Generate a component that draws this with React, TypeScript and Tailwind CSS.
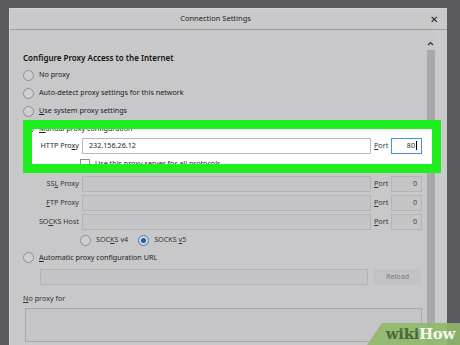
import type { ReactNode } from 'react'

function Radio({ checked = false }: { checked?: boolean }) {
  return (
    <span
      className={`flex h-[11px] w-[11px] shrink-0 items-center justify-center rounded-full border ${
        checked ? 'border-[#3b7dc4] bg-[#d6d6d8]' : 'border-[#8e8e90] bg-[#cfcfd1]'
      }`}
    >
      {checked && <span className="h-[5px] w-[5px] rounded-full bg-[#1e5f9f]" />}
    </span>
  )
}

function U({ children }: { children: ReactNode }) {
  return <span className="underline underline-offset-1">{children}</span>
}

function RadioRow({ label, checked, h = 'h-[18px]' }: { label: ReactNode; checked?: boolean; h?: string }) {
  return (
    <div className={`flex ${h} items-center gap-[5px]`}>
      <Radio checked={checked} />
      <span>{label}</span>
    </div>
  )
}

function ProxyRow({ label, white = false, port = '0' }: { label: ReactNode; white?: boolean; port?: string }) {
  return (
    <div className="flex h-[19px] items-center">
      <span className={`w-[56px] shrink-0 text-right ${white ? 'text-[#1b1b1b]' : 'text-[#333]'}`}>{label}</span>
      <div
        className={`ml-[3px] flex h-[16px] flex-1 items-center border px-[6px] ${
          white ? 'border-[#b9b9bb] bg-white' : 'border-[#b4b4b6] bg-[#c5c5c7]'
        }`}
      >
        {white && <span className="text-[#1b1b1b]">232.156.26.12</span>}
      </div>
      <span className="ml-[3px] w-[15px] shrink-0 text-[#333]">
        <U>P</U>ort
      </span>
      <div
        className={`ml-[2px] flex h-[16px] w-[31px] shrink-0 items-center justify-end border pr-[4px] ${
          white ? 'border-[#4a8fdc] bg-white text-[#1b1b1b]' : 'border-[#b4b4b6] bg-[#c5c5c7] text-[#444]'
        }`}
      >
        {port}
        {white && <span className="ml-[1px] h-[9px] w-px bg-black" />}
      </div>
    </div>
  )
}

export default function App() {
  return (
    <div className="relative h-[345px] w-[460px] overflow-hidden bg-[#5a5a5e] pt-[8px] pl-[9px] font-['Noto_Sans',sans-serif] text-[7.2px] leading-none text-[#1b1b1b]">
      <div className="flex h-[340px] w-[438px] flex-col border-l border-t border-[#d6d6d8] bg-[#c8c8ca]">
        <div className="flex h-[21px] shrink-0 items-center border-b border-[#9e9ea0] bg-[#c9c9cb]">
          <span className="flex-1 text-center text-[7.5px] text-[#222]">Connection Settings</span>
          <span className="w-[26px] text-center text-[10px] text-[#222]">✕</span>
        </div>

        <div className="flex flex-1">
          <div className="flex flex-1 flex-col pl-[13px] pr-[4px] pt-[21px]">
            <div className="flex h-[14px] items-center text-[8px] font-semibold text-[#111]">
              Configure Proxy Access to the Internet
            </div>
            <div className="mt-[1px]">
              <RadioRow label="No proxy" />
              <RadioRow label="Auto-detect proxy settings for this network" />
              <RadioRow
                label={
                  <>
                    <U>U</U>se system proxy settings
                  </>
                }
              />
            </div>

            <div className="relative h-[53px]">
              <div className="absolute left-0 top-0 h-full w-[418px] bg-white" />
              <div className="relative z-10">
                <RadioRow
                  h="h-[17px]"
                  label={
                    <>
                      <U>M</U>anual proxy configuration
                    </>
                  }
                />
                <div className="-mt-px">
                  <ProxyRow
                    white
                    port="80"
                    label={
                      <>
                        HTTP Pro<U>x</U>y
                      </>
                    }
                  />
                </div>
                <div className="flex h-[18px] items-center pl-[57px]">
                  <span className="h-[10px] w-[10px] border border-[#8e8e90] bg-white" />
                  <span className="ml-[5px]">Use this proxy server for all protocols</span>
                </div>
              </div>
              <div className="pointer-events-none absolute left-0 top-0 z-20 h-full w-[418px] border-[9px] border-[#1fee1f]" />
            </div>

            <div className="mt-[1px]">
              <ProxyRow
                label={
                  <>
                    SS<U>L</U> Proxy
                  </>
                }
              />
              <ProxyRow
                label={
                  <>
                    <U>F</U>TP Proxy
                  </>
                }
              />
              <ProxyRow
                label={
                  <>
                    SO<U>C</U>KS Host
                  </>
                }
              />
            </div>

            <div className="flex h-[18px] items-center pl-[57px] text-[#333]">
              <Radio />
              <span className="ml-[5px]">
                SOC<U>K</U>S v4
              </span>
              <span className="ml-[10px]">
                <Radio checked />
              </span>
              <span className="ml-[5px]">
                SOCKS <U>v</U>5
              </span>
            </div>

            <RadioRow
              h="h-[17px]"
              label={
                <>
                  <U>A</U>utomatic proxy configuration URL
                </>
              }
            />

            <div className="mt-[3px] flex h-[16px] items-stretch pl-[17px]">
              <div className="w-[328px] border border-[#b4b4b6] bg-[#c5c5c7]" />
              <div className="ml-[6px] flex w-[47px] items-center justify-center bg-[#c2c2c4] text-[#7a7a7c]">
                Reload
              </div>
            </div>

            <div className="mt-[6px] flex h-[16px] items-center text-[#333]">
              <span>
                <U>N</U>o proxy for
              </span>
            </div>
            <div className="ml-[2px] mt-[1px] h-[34px] border border-[#a9a9ab] bg-[#c6c6c8]" />
          </div>

          <div className="flex w-[9px] shrink-0 flex-col items-center pt-[11px]">
            <svg width="7" height="5" viewBox="0 0 7 5" className="mb-[4px]">
              <path d="M1 4 L3.5 1.5 L6 4" stroke="#333" strokeWidth="1.2" fill="none" />
            </svg>
            <div className="w-[8px] flex-1 bg-[#a8a8aa]" />
          </div>
          <div className="w-[12px] shrink-0 bg-[#cacacc]" />
        </div>
      </div>

      <div className="absolute bottom-0 right-0 flex h-[22px] w-[93px] items-center justify-end bg-[#8fb86a]/90 pr-[5px] [clip-path:polygon(16%_0,100%_0,100%_100%,0_100%)]">
        <span className="font-['DejaVu_Serif',serif] text-[15px] font-bold leading-none tracking-tight">
          <span className="text-[#4e6a3c]">wiki</span>
          <span className="text-[#f4f8ef]">How</span>
        </span>
      </div>
    </div>
  )
}
